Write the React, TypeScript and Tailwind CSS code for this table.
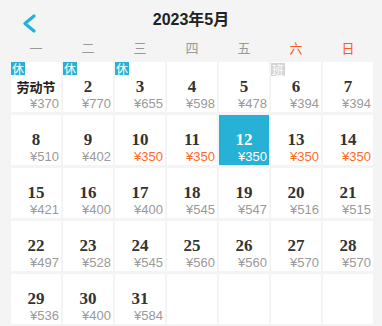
import React from "react";

type Day = {
  d: number;
  label?: string;
  price: number;
  orange?: boolean;
  selected?: boolean;
  badge?: "rest" | "work";
};

const days: Day[] = [
  { d: 1, label: "劳动节", price: 370, badge: "rest" },
  { d: 2, price: 770, badge: "rest" },
  { d: 3, price: 655, badge: "rest" },
  { d: 4, price: 598 },
  { d: 5, price: 478 },
  { d: 6, price: 394, badge: "work" },
  { d: 7, price: 394 },
  { d: 8, price: 510 },
  { d: 9, price: 402 },
  { d: 10, price: 350, orange: true },
  { d: 11, price: 350, orange: true },
  { d: 12, price: 350, selected: true },
  { d: 13, price: 350, orange: true },
  { d: 14, price: 350, orange: true },
  { d: 15, price: 421 },
  { d: 16, price: 400 },
  { d: 17, price: 400 },
  { d: 18, price: 545 },
  { d: 19, price: 547 },
  { d: 20, price: 516 },
  { d: 21, price: 515 },
  { d: 22, price: 497 },
  { d: 23, price: 528 },
  { d: 24, price: 545 },
  { d: 25, price: 560 },
  { d: 26, price: 560 },
  { d: 27, price: 570 },
  { d: 28, price: 570 },
  { d: 29, price: 536 },
  { d: 30, price: 400 },
  { d: 31, price: 584 },
];

const weekdays = ["一", "二", "三", "四", "五", "六", "日"];

function Cell({ day }: { day: Day }) {
  const sel = day.selected;
  return (
    <div
      className={`relative h-[50px] flex flex-col pt-[17px] ${
        sel ? "bg-[#27b1d6]" : "bg-white"
      }`}
    >
      {day.badge === "rest" && (
        <div className="absolute left-0 top-0 w-[14px] h-[13px] bg-[#27b1d6] text-white text-[12px] leading-[13px] text-center font-['Noto_Sans_CJK_SC',sans-serif]">
          休
        </div>
      )}
      {day.badge === "work" && (
        <div className="absolute left-0 top-[1px] w-[14px] h-[13px] bg-[#d4d4d4] text-white text-[12px] leading-[13px] text-center font-['Noto_Sans_CJK_SC',sans-serif]">
          班
        </div>
      )}
      {day.label ? (
        <div className="text-center text-[13px] leading-[16px] font-bold text-[#222] font-['Noto_Sans_CJK_SC',sans-serif]">
          {day.label}
        </div>
      ) : (
        <div
          className={`text-center text-[17px] leading-[16px] font-bold font-['Liberation_Serif',serif] ${
            sel ? "text-white" : "text-[#333]"
          }`}
        >
          {day.d}
        </div>
      )}
      <div
        className={`mt-[1px] pr-[2px] text-right text-[13px] leading-[15px] font-['Liberation_Sans',sans-serif] ${
          sel ? "text-white" : day.orange ? "text-[#ff6a1f]" : "text-[#9a9a9a]"
        }`}
      >
        ¥{day.price}
      </div>
    </div>
  );
}

export default function App() {
  const cells: (Day | null)[] = [...days, null, null, null, null];
  return (
    <div className="w-[382px] h-[326px] bg-[#f4f4f4] overflow-hidden font-['Liberation_Sans','Noto_Sans_CJK_SC',sans-serif]">
      <div className="grid grid-cols-[1fr_auto_1fr] h-[40px]">
        <div>
          <svg
            className="ml-[21px] mt-[13px]"
            width="16"
            height="20"
            viewBox="0 0 16 20"
            fill="none"
          >
            <polyline
              points="13,3 4,10.5 13,18"
              stroke="#2aafd7"
              strokeWidth="3.2"
              strokeLinecap="round"
              strokeLinejoin="round"
            />
          </svg>
        </div>
        <div className="mt-[10px] leading-[20px] text-[16px] font-bold text-[#222] font-['Liberation_Sans','Noto_Sans_CJK_SC',sans-serif]">
          2023年5月
        </div>
        <div />
      </div>
      <div className="grid grid-cols-7 gap-x-[2px] pl-[11px] pr-[9px] h-[22px]">
        {weekdays.map((w, i) => (
          <div
            key={w}
            className={`text-center text-[13px] leading-[15px] font-['Noto_Sans_CJK_SC',sans-serif] ${
              i >= 5 ? "text-[#ff5a1a]" : "text-[#999]"
            }`}
          >
            {w}
          </div>
        ))}
      </div>
      <div className="grid grid-cols-7 gap-x-[2px] gap-y-[3px] pl-[11px] pr-[9px]">
        {cells.map((c, i) =>
          c ? <Cell key={i} day={c} /> : <div key={i} className="h-[50px] bg-white" />
        )}
      </div>
    </div>
  );
}
